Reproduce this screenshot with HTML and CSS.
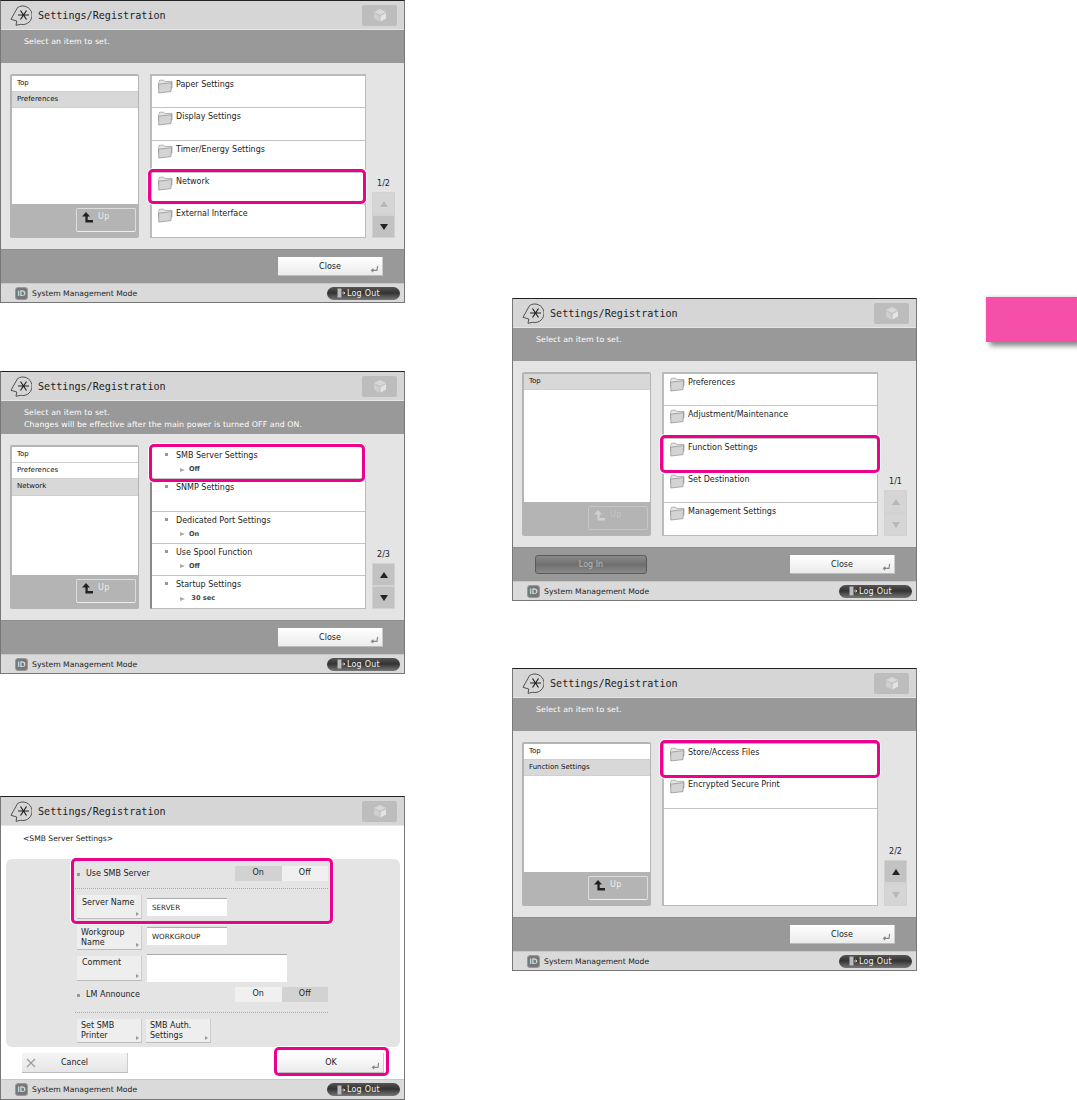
FILE: index.html
```html
<!DOCTYPE html>
<html lang="en">
<head>
<meta charset="utf-8">
<title>Settings/Registration</title>
<link rel="stylesheet" href="styles.css">
</head>
<body>
<svg class="defs" aria-hidden="true">
  <symbol id="logo" viewBox="0 0 22 21"><path d="M7.5 2.6A9.3 9.3 0 1 1 10.5 19.3L6 20.3 6.8 16 1 14.3Z" fill="none" stroke="#444" stroke-width=".9"/><path d="M8 10H19M10.5 5.5 16.5 14.5M16.5 5.5 10.5 14.5" stroke="#222" stroke-width="1.2"/></symbol>
  <symbol id="cube" viewBox="0 0 14 14"><path d="M7 1 13 4 7 7 1 4Z" fill="#d8d8d8"/><path d="M1 5 6.5 8V13.5L1 10.5Z" fill="#cfcfcf"/><path d="M13 5 7.5 8V13.5L13 10.5Z" fill="#e4e4e4"/></symbol>
  <symbol id="folder" viewBox="0 0 15 15"><path d="M.6 3.6 1.6 1.2H5.6L6.6 2.4H14V9H.6Z" fill="#e6e6e6" stroke="#9a9a9a" stroke-width=".7"/><path d="M.6 5.2 13.6 3.6 13 12.6.8 14Z" fill="#d4d4d4" stroke="#8c8c8c" stroke-width=".7"/></symbol>
  <symbol id="up" viewBox="0 0 11 11"><path d="M4 0 8 4.5H5.7V8H11V10.5H3.4V4.5H0Z" fill="currentColor"/></symbol>
  <symbol id="enter" viewBox="0 0 11 8"><path d="M9.5 .5 8.8 5.5H3.5M5 3.8 2.8 5.5 4.6 7.5" fill="none" stroke="#888" stroke-width="1.3"/></symbol>
  <symbol id="door" viewBox="0 0 8 10"><path d="M.5 .5H4.5V9.5H.5Z" fill="#bbb"/><path d="M5 5H8M6.6 3.6 8 5 6.6 6.4" fill="none" stroke="#ccc"/></symbol>
  <symbol id="cross" viewBox="0 0 10 10"><path d="M1 1 9 9M9 1 1 9" stroke="#999" stroke-width="1.1"/></symbol>
</svg>
<div class="page">
  <div class="col col-left">

    <section class="screen">
      <header class="title"><svg class="logo"><use href="#logo"/></svg><h1>Settings/Registration</h1><div class="cube"><svg class="cube-ico"><use href="#cube"/></svg></div></header>
      <div class="msg">Select an item to set.</div>
      <div class="body">
        <div class="tree">
          <ul class="crumbs"><li>Top</li><li class="cur">Preferences</li></ul>
          <div class="tree-foot"><div class="up"><svg class="up-ico"><use href="#up"/></svg><span>Up</span></div></div>
        </div>
        <ul class="list">
          <li><svg class="folder"><use href="#folder"/></svg>Paper Settings</li>
          <li><svg class="folder"><use href="#folder"/></svg>Display Settings</li>
          <li><svg class="folder"><use href="#folder"/></svg>Timer/Energy Settings</li>
          <li><svg class="folder"><use href="#folder"/></svg>Network</li>
          <li><svg class="folder"><use href="#folder"/></svg>External Interface</li>
        </ul>
        <div class="scroll"><div class="pg">1/2</div><div class="sb off"><i class="tri-up"></i></div><div class="sb"><i class="tri-down"></i></div></div>
      </div>
      <div class="action"><div class="btn close">Close<svg class="enter"><use href="#enter"/></svg></div></div>
      <footer class="status"><span class="id">ID</span><span class="mode">System Management Mode</span><div class="logout"><svg class="door"><use href="#door"/></svg>Log Out</div></footer>
      <div class="mark m1"></div>
    </section>

    <section class="screen s2">
      <header class="title"><svg class="logo"><use href="#logo"/></svg><h1>Settings/Registration</h1><div class="cube"><svg class="cube-ico"><use href="#cube"/></svg></div></header>
      <div class="msg">Select an item to set.<br>Changes will be effective after the main power is turned OFF and ON.</div>
      <div class="body">
        <div class="tree">
          <ul class="crumbs"><li>Top</li><li>Preferences</li><li class="cur">Network</li></ul>
          <div class="tree-foot"><div class="up"><svg class="up-ico"><use href="#up"/></svg><span>Up</span></div></div>
        </div>
        <ul class="list settings">
          <li><i class="sq"></i>SMB Server Settings<div class="val"><i class="arr"></i>Off</div></li>
          <li><i class="sq"></i>SNMP Settings</li>
          <li><i class="sq"></i>Dedicated Port Settings<div class="val"><i class="arr"></i>On</div></li>
          <li><i class="sq"></i>Use Spool Function<div class="val"><i class="arr"></i>Off</div></li>
          <li><i class="sq"></i>Startup Settings<div class="val"><i class="arr"></i>&nbsp;30 sec</div></li>
        </ul>
        <div class="scroll"><div class="pg">2/3</div><div class="sb"><i class="tri-up"></i></div><div class="sb"><i class="tri-down"></i></div></div>
      </div>
      <div class="action"><div class="btn close">Close<svg class="enter"><use href="#enter"/></svg></div></div>
      <footer class="status"><span class="id">ID</span><span class="mode">System Management Mode</span><div class="logout"><svg class="door"><use href="#door"/></svg>Log Out</div></footer>
      <div class="mark m2"></div>
    </section>

    <section class="screen s3">
      <header class="title"><svg class="logo"><use href="#logo"/></svg><h1>Settings/Registration</h1><div class="cube"><svg class="cube-ico"><use href="#cube"/></svg></div></header>
      <div class="sub">&lt;SMB Server Settings&gt;</div>
      <div class="panel">
        <div class="row"><span class="lbl"><i class="sq"></i>Use SMB Server</span><div class="toggle"><span class="on">On</span><span>Off</span></div></div>
        <div class="dots"></div>
        <div class="field f1"><div class="tile">Server Name<i class="tick"></i></div><div class="input">SERVER</div></div>
        <div class="field f2"><div class="tile two">Workgroup<br>Name<i class="tick"></i></div><div class="input">WORKGROUP</div></div>
        <div class="field f3"><div class="tile tall">Comment<i class="tick"></i></div><div class="input wide"></div></div>
        <div class="row r2"><span class="lbl"><i class="sq"></i>LM Announce</span><div class="toggle"><span>On</span><span class="on">Off</span></div></div>
        <div class="dots d2"></div>
        <div class="pair"><div class="tile two">Set SMB<br>Printer<i class="tick"></i></div><div class="tile two">SMB Auth.<br>Settings<i class="tick"></i></div></div>
      </div>
      <div class="foot-btns"><div class="btn cancel"><svg class="cross"><use href="#cross"/></svg>Cancel</div><div class="btn close">OK<svg class="enter"><use href="#enter"/></svg></div></div>
      <footer class="status"><span class="id">ID</span><span class="mode">System Management Mode</span><div class="logout"><svg class="door"><use href="#door"/></svg>Log Out</div></footer>
      <div class="mark m3a"></div>
      <div class="mark m3b"></div>
    </section>
  </div>

  <div class="col col-right">
    <section class="screen">
      <header class="title"><svg class="logo"><use href="#logo"/></svg><h1>Settings/Registration</h1><div class="cube"><svg class="cube-ico"><use href="#cube"/></svg></div></header>
      <div class="msg">Select an item to set.</div>
      <div class="body">
        <div class="tree">
          <ul class="crumbs"><li class="cur">Top</li></ul>
          <div class="tree-foot"><div class="up dim"><svg class="up-ico"><use href="#up"/></svg><span>Up</span></div></div>
        </div>
        <ul class="list">
          <li><svg class="folder"><use href="#folder"/></svg>Preferences</li>
          <li><svg class="folder"><use href="#folder"/></svg>Adjustment/Maintenance</li>
          <li><svg class="folder"><use href="#folder"/></svg>Function Settings</li>
          <li><svg class="folder"><use href="#folder"/></svg>Set Destination</li>
          <li><svg class="folder"><use href="#folder"/></svg>Management Settings</li>
        </ul>
        <div class="scroll"><div class="pg">1/1</div><div class="sb off"><i class="tri-up"></i></div><div class="sb off"><i class="tri-down"></i></div></div>
      </div>
      <div class="action split"><div class="login">Log In</div><div class="btn close">Close<svg class="enter"><use href="#enter"/></svg></div></div>
      <footer class="status"><span class="id">ID</span><span class="mode">System Management Mode</span><div class="logout"><svg class="door"><use href="#door"/></svg>Log Out</div></footer>
      <div class="mark m4"></div>
    </section>

    <section class="screen s5">
      <header class="title"><svg class="logo"><use href="#logo"/></svg><h1>Settings/Registration</h1><div class="cube"><svg class="cube-ico"><use href="#cube"/></svg></div></header>
      <div class="msg">Select an item to set.</div>
      <div class="body">
        <div class="tree">
          <ul class="crumbs"><li>Top</li><li class="cur">Function Settings</li></ul>
          <div class="tree-foot"><div class="up"><svg class="up-ico"><use href="#up"/></svg><span>Up</span></div></div>
        </div>
        <ul class="list">
          <li><svg class="folder"><use href="#folder"/></svg>Store/Access Files</li>
          <li><svg class="folder"><use href="#folder"/></svg>Encrypted Secure Print</li>
        </ul>
        <div class="scroll"><div class="pg">2/2</div><div class="sb"><i class="tri-up"></i></div><div class="sb off"><i class="tri-down"></i></div></div>
      </div>
      <div class="action"><div class="btn close">Close<svg class="enter"><use href="#enter"/></svg></div></div>
      <footer class="status"><span class="id">ID</span><span class="mode">System Management Mode</span><div class="logout"><svg class="door"><use href="#door"/></svg>Log Out</div></footer>
      <div class="mark m5"></div>
    </section>
  </div>
</div>
<div class="tab"></div>
</body>
</html>
```
FILE: styles.css
```css
* { box-sizing: border-box; }
html, body { margin: 0; padding: 0; background: #fff; }
body { width: 1077px; height: 1100px; overflow: hidden; position: relative; font-family: "DejaVu Sans", sans-serif; font-size: 8px; color: #222; }
ul { list-style: none; margin: 0; padding: 0; }
.defs { position: absolute; width: 0; height: 0; }
.page { display: flex; }
.col-left { width: 512px; }
.col-right { padding-top: 298px; }

.screen { position: relative; width: 405px; height: 303px; display: flex; flex-direction: column; border: 1px solid #777; border-top-color: #222; background: #e4e4e4; }
.s2 { margin-top: 68px; }
.s3 { margin-top: 122px; height: 304px; background: #fff; }
.s5 { margin-top: 67px; }

.title { height: 29px; flex: none; display: flex; align-items: center; background: #d6d6d6; padding: 0 7px 0 9px; border-bottom: 1px solid #e6e6e6; }
.logo { width: 22px; height: 21px; flex: none; }
.title h1 { margin: 0 0 0 6px; flex: 1; font: 400 10.1px "DejaVu Sans Mono", monospace; color: #222; }
.cube { width: 35px; height: 21px; background: #bdbdbd; border-radius: 2px; display: flex; align-items: center; justify-content: center; }
.cube-ico { width: 14px; height: 14px; }

.msg { height: 33px; flex: none; background: #999; color: #fff; padding: 6px 23px 0; font-size: 7.8px; line-height: 12px; letter-spacing: .1px; }
.body { height: 186px; flex: none; display: flex; padding: 11px 9px 11px 9px; }
.tree { width: 129px; flex: none; background: #b4b4b4; border-radius: 2px; padding: 2px 1px 1px 2px; display: flex; flex-direction: column; }
.crumbs { flex: 1; background: #fff; }
.crumbs li { height: 16.2px; padding: 0 5px; line-height: 14px; font-size: 7px; color: #111; border-bottom: 1px solid #cfcfcf; }
.crumbs .cur { background: #d8d8d8; }
.tree-foot { height: 33px; flex: none; display: flex; justify-content: flex-end; align-items: flex-start; padding: 4px 2px 0 0; }
.up { width: 60px; height: 24px; border: 1px solid #ddd; border-radius: 2px; border-bottom-color: #eee; display: flex; padding: 3px 0 0 5px; color: #222; }
.up span { color: #eee; margin-left: 5px; line-height: 10px; letter-spacing: .5px; }
.up-ico { width: 11px; height: 11px; color: #222; }
.up.dim { border-color: #c6c6c6; }
.up.dim .up-ico { color: #d0d0d0; }
.up.dim span { color: #c4c4c4; }

.list { width: 216px; flex: none; margin-left: 11px; background: #fff; border: 2px solid #bbb; border-right-width: 1px; border-bottom-width: 1px; }
.list li { height: 32.25px; padding: 3px 0 0 6px; display: flex; align-items: flex-start; border-bottom: 1px solid #c4c4c4; font-size: 8px; line-height: 11px; color: #222; position: relative; }
.list li:nth-child(5) { border-bottom: 0; }
.folder { width: 15px; height: 15px; flex: none; margin-right: 3px; }
.settings { display: block; border-left-color: #888; }
.settings li { display: block; padding: 3px 0 0 24px; }
.sq { position: absolute; left: 13px; top: 6px; width: 3px; height: 3px; background: #999; }
.val { font-size: 6.6px; line-height: 9px; padding: 4px 0 0 4px; display: flex; align-items: center; font-weight: 700; color: #444; }
.arr { width: 0; height: 0; border-left: 5px solid #aaa; border-top: 2.5px solid transparent; border-bottom: 2.5px solid transparent; margin-right: 4px; }

.scroll { flex: 1; margin-left: 6px; display: flex; flex-direction: column; justify-content: flex-end; }
.pg { text-align: center; font-size: 8px; line-height: 11px; margin-bottom: 3px; }
.sb { width: 23px; height: 23px; background: #c2c2c2; border: 1px solid #d2d2d2; display: flex; align-items: center; justify-content: center; }
.sb.off { background: #d5d5d5; }
.tri-up, .tri-down { width: 0; height: 0; border-left: 4px solid transparent; border-right: 4px solid transparent; }
.tri-up { border-bottom: 6px solid #222; }
.tri-down { border-top: 6px solid #222; }
.off .tri-up { border-bottom-color: #b8b8b8; }
.off .tri-down { border-top-color: #b8b8b8; }

.action { height: 34px; flex: none; background: #999; border-top: 1px solid #8e8e8e; display: flex; justify-content: flex-end; align-items: center; padding-right: 21px; }
.action.split { justify-content: space-between; padding-left: 22px; }
.btn { position: relative; height: 19px; background: linear-gradient(#fff, #ebebeb); border-bottom: 1px solid #bbb; border-right: 1px solid #ccc; text-align: center; line-height: 19px; font-size: 8px; color: #222; }
.close { width: 105px; }
.enter { position: absolute; right: 3px; bottom: 2px; width: 10px; height: 8px; }
.login { width: 112px; height: 19px; border: 1px solid #5a5a5a; border-radius: 3px; background: linear-gradient(#8a8a8a, #6f6f6f 50%, #8a8a8a); color: #b8b8b8; text-align: center; line-height: 18px; }

.status { height: 19px; flex: none; background: #dadada; border-top: 1px solid #c8c8c8; display: flex; align-items: center; padding: 0 4px 0 14px; }
.id { width: 13px; height: 13px; border-radius: 3px; background: #777; color: #fff; font-size: 7.5px; text-align: center; line-height: 11px; border: 1px solid #999; }
.mode { margin-left: 4px; flex: 1; font-size: 7.7px; }
.logout { width: 73px; height: 13px; border-radius: 7px; background: linear-gradient(#555, #333 45%, #777); color: #eee; display: flex; align-items: center; padding-left: 10px; line-height: 13px; letter-spacing: .2px; }
.door { width: 8px; height: 10px; margin-right: 2px; }

.sub { height: 33px; flex: none; padding: 7px 0 0 22px; font-size: 7.6px; line-height: 11px; }
.panel { height: 188px; flex: none; margin: 0 4px 0 5px; background: #e4e4e4; border-radius: 6px; padding: 7px 0 0 69px; }
.row { width: 253px; height: 15px; display: flex; justify-content: space-between; align-items: center; }
.lbl { position: relative; padding-left: 11px; font-size: 8px; }
.lbl .sq { left: 2px; top: 4px; }
.toggle { width: 93px; height: 15px; display: flex; background: #f0f0f0; }
.toggle span { flex: 1; text-align: center; line-height: 14px; }
.toggle .on { background: #d2d2d2; }
.dots { width: 253px; margin-top: 7px; border-top: 1px dotted #aaa; }
.field { display: flex; align-items: flex-start; gap: 5px; margin-left: 2px; }
.f1 { margin-top: 6px; }
.f2 { margin-top: 7px; }
.f3 { margin-top: 6px; }
.tile { position: relative; width: 65px; height: 24px; background: #eee; border-bottom: 1px solid #bbb; border-right: 1px solid #ccc; padding: 3px 0 0 5px; line-height: 10px; font-size: 8px; }
.tile.two { padding: 2px 0 0 4px; }
.tile.tall { height: 25px; padding-top: 2px; }
.tick { position: absolute; right: 2px; bottom: 2px; width: 0; height: 0; border-left: 3px solid #999; border-top: 2.5px solid transparent; border-bottom: 2.5px solid transparent; }
.input { width: 80px; height: 18px; margin-top: 3px; background: #fff; border-top: 1px solid #aaa; padding-left: 5px; line-height: 17px; font-size: 7.2px; }
.f2 .input { margin-top: 1px; }
.input.wide { width: 140px; height: 28px; margin-top: -2px; }
.r2 { margin-top: 5px; }
.d2 { margin-top: 10px; }
.pair { display: flex; gap: 4px; margin: 6px 0 0 2px; }
.foot-btns { height: 32px; flex: none; display: flex; justify-content: space-between; align-items: center; padding: 0 20px 0 21px; background: #fff; }
.cancel { width: 106px; height: 20px; background: linear-gradient(#f4f4f4, #e6e6e6); }
.cross { position: absolute; left: 4px; top: 5px; width: 10px; height: 10px; }
.foot-btns .close { height: 20px; }
.s3 .status { height: 20px; }

.mark { position: absolute; border: 3px solid #ec008c; border-radius: 5px; box-shadow: 0 0 0 1px #fff; }
.m1 { left: 147px; top: 168px; width: 218px; height: 35px; }
.m2 { left: 148px; top: 72px; width: 216px; height: 38px; }
.m3a { left: 70px; top: 61px; width: 262px; height: 66px; }
.m3b { left: 273px; top: 250px; width: 115px; height: 29px; }
.m4 { left: 147px; top: 136px; width: 220px; height: 38px; }
.m5 { left: 147px; top: 71px; width: 220px; height: 38px; }

.tab { position: absolute; left: 986px; top: 297px; width: 91px; height: 45px; background: #f54fa9; box-shadow: 4px 4px 5px rgba(0,0,0,.45), 0 -1px 3px rgba(0,0,0,.12); }
```
